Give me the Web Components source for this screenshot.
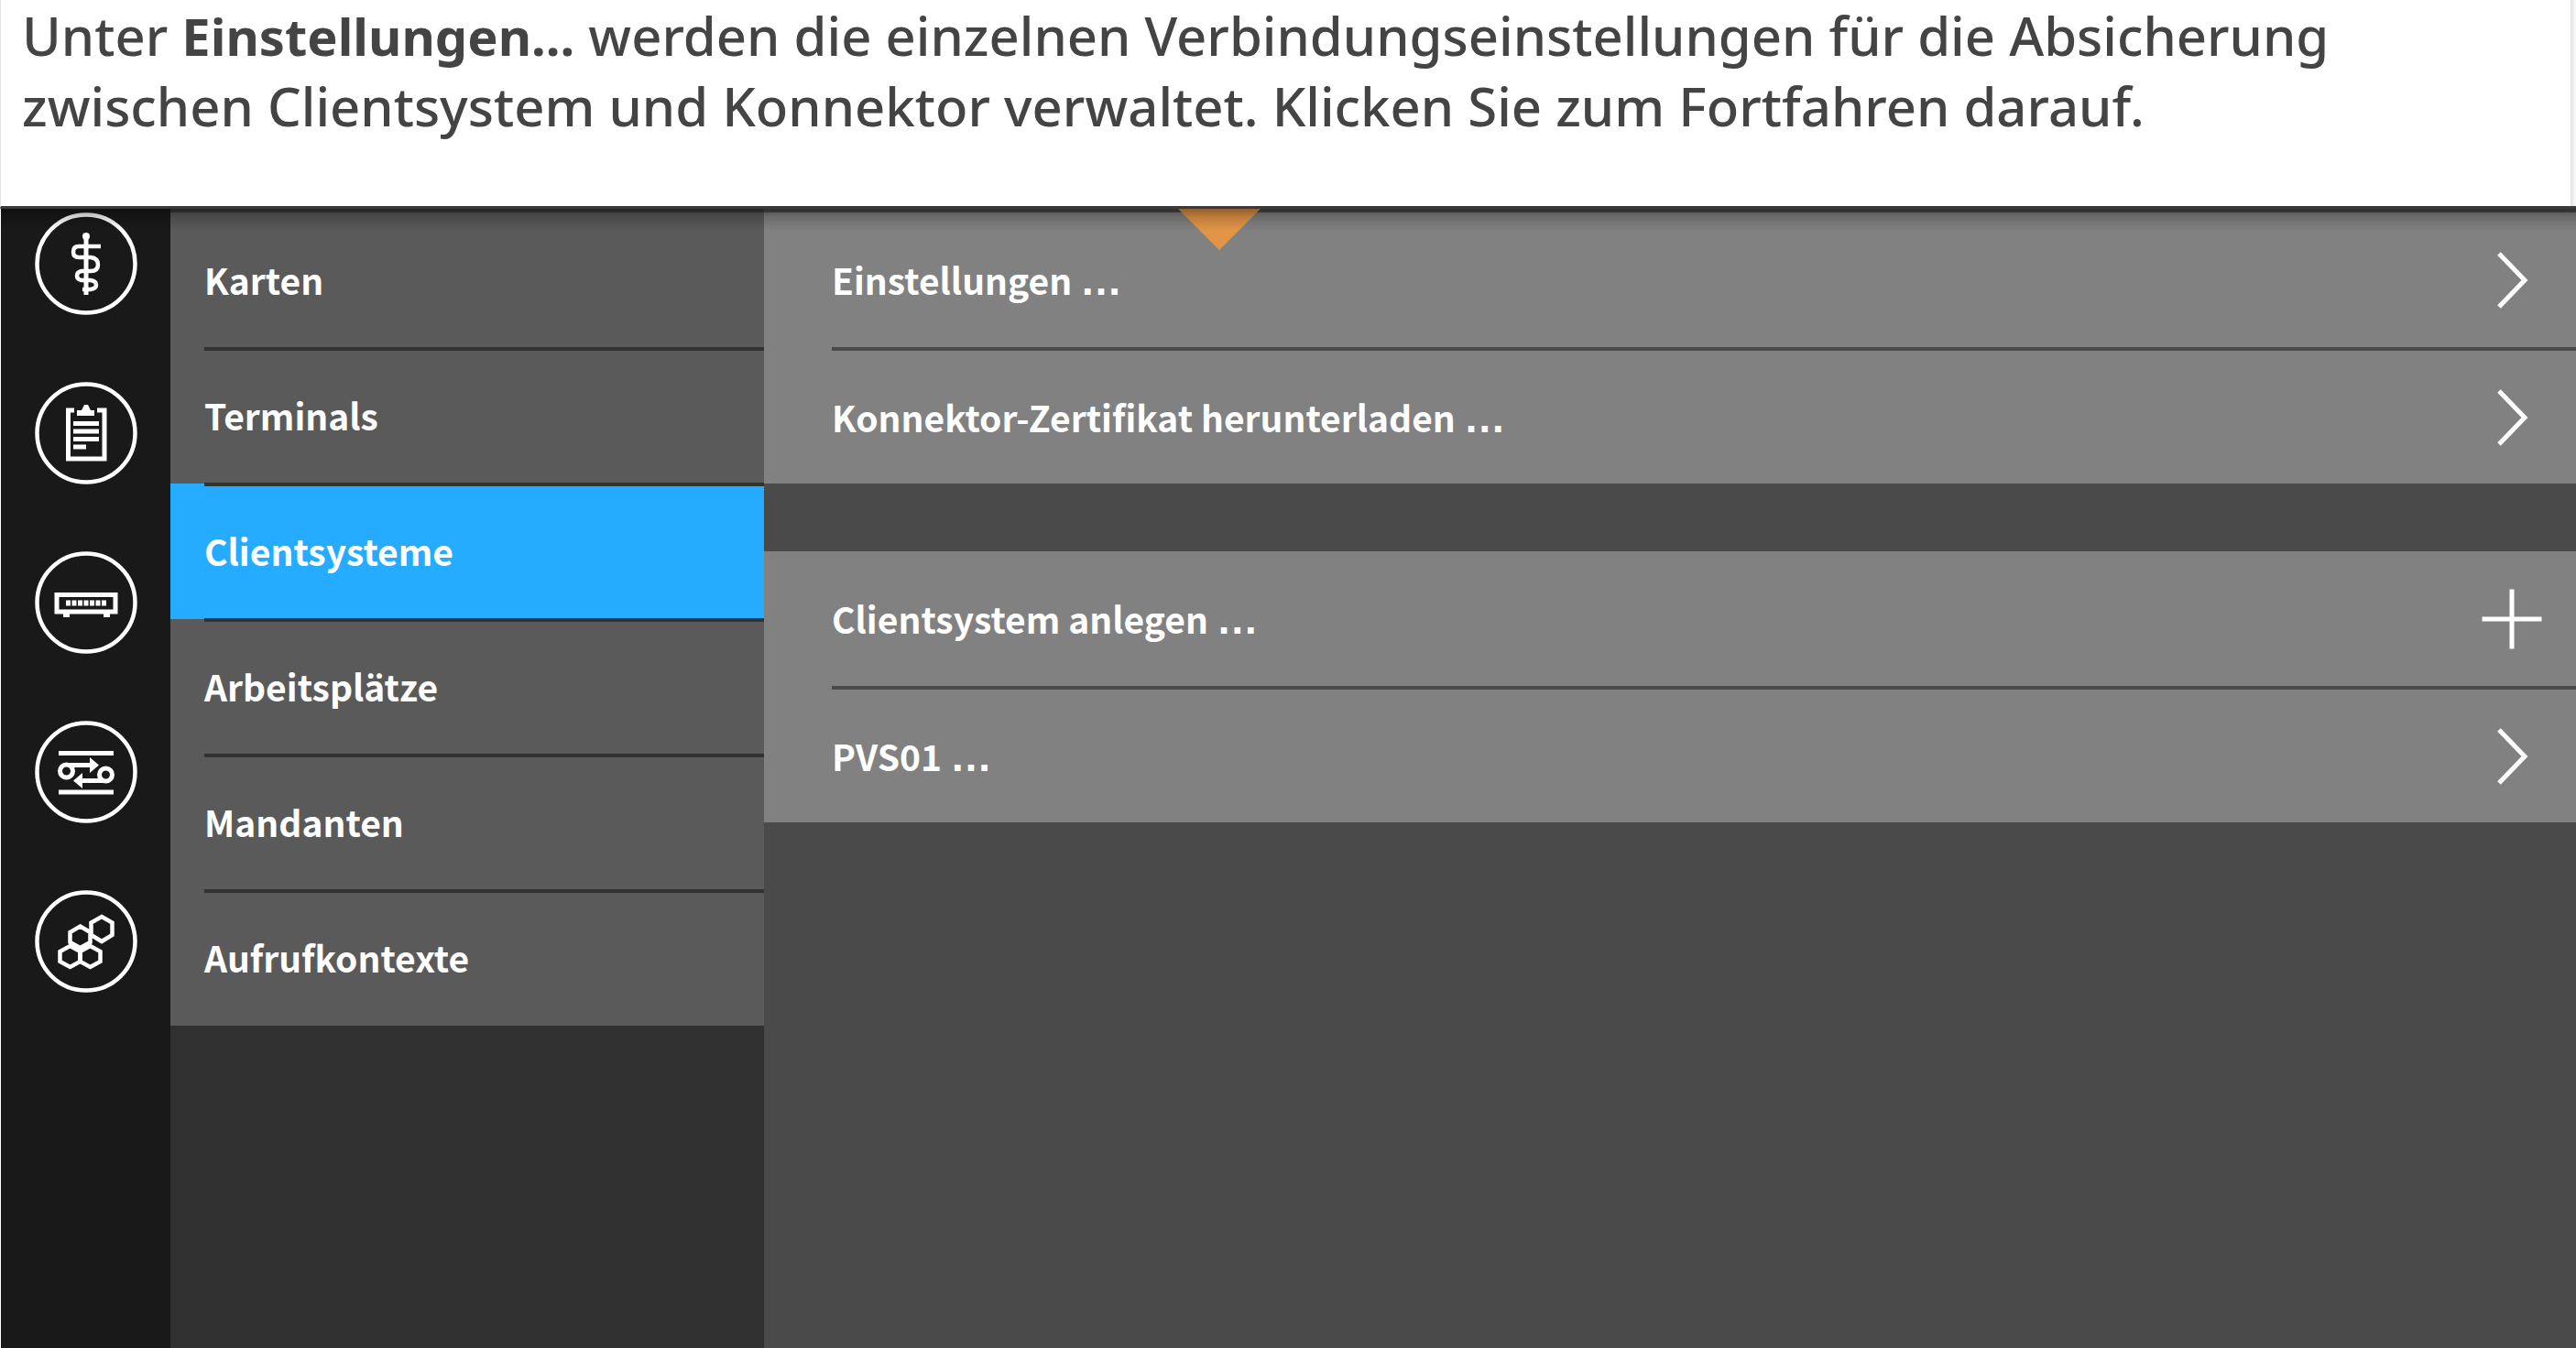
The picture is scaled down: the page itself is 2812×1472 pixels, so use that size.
<!DOCTYPE html>
<html lang="de">
<head>
<meta charset="utf-8">
<title>Konnektor – Clientsysteme</title>
<style>
body { margin: 0; background: #4a4a4a; }
</style>
</head>
<body>
<konnektor-page></konnektor-page>
<script>
const define = (name, html) => customElements.define(name, class extends HTMLElement {
  constructor() {
    super();
    const t = document.createElement('template');
    t.innerHTML = typeof html === 'function' ? html(this) : html;
    this.attachShadow({ mode: 'open' }).append(t.content.cloneNode(true));
  }
});

define('tour-hint', `
<style>
:host { display: block; box-sizing: border-box; height: 228px; padding: 0 23px; background: #fff;
  border-left: 1px solid #e4e4e4; border-bottom: 3px solid #3a3a3a; position: relative; z-index: 2;
  color: #444; font: 500 58px/77px "Noto Sans", sans-serif; }
:host::after { content: ""; position: absolute; top: 0; bottom: 0; right: 0; width: 3px; background: #f6f6f6; border-left: 3px solid #e6e6e6; }
::slotted(strong) { font-size: 56px; font-weight: 700; line-height: 1; }
p { margin: 0; }
i { position: absolute; left: 1285px; top: 228px; width: 90px; height: 45px; background: #e39547; clip-path: polygon(0 0, 100% 0, 50% 100%); }
b { position: absolute; left: 0; right: 0; top: 228px; height: 24px; background: linear-gradient(rgba(0,0,0,.36), rgba(0,0,0,.16) 40%, rgba(0,0,0,0)); }
</style>
<p><slot></slot></p><i></i><b></b>`);

const icons = {
  medizin: `<path d="M56 28V90" stroke-width="5"/><circle cx="56" cy="26" r="3" fill="#fff" stroke-width="2"/><path d="M72 37H48Q42 37 42 43T48 49H61Q69 50 69 57T61 64H51Q46 65 46 69T51 74H61Q67 75 67 79T61 84H52" stroke-width="4.5"/>`,
  protokoll: `<path d="M43 31H36.500V84H76V31H68" stroke-width="5"/><path d="M46 37V31H51L54 25H58L61 31H65V37Z" fill="#fff" stroke="none"/><path d="M42 45.500H70M42 54H70M42 62.500H70M42 71H56" stroke-width="5"/>`,
  netz: `<path d="M24 47.500H88V66H24Z" stroke-width="5"/><path d="M34 56.500H78" stroke-width="6" stroke-dasharray="5 1.500"/><path d="M31 70H38M75 70H82" stroke-width="4"/>`,
  vpn: `<path d="M26 35.500H86M26 78H86" stroke-width="5"/><circle cx="34.500" cy="55" r="7" stroke-width="5"/><circle cx="77.500" cy="59" r="7" stroke-width="5"/><path d="M36 48.500H64M76 65.500H48" stroke-width="5"/><path d="M60 40L70 48.500L60 57ZM52 57L42 65.500L52 74Z" fill="#fff" stroke="none"/>`,
  module: `<g stroke-width="4.500"><path d="M73 29L84.500 35.500V49L73 56L61.500 49V35.500Z"/><path d="M49.500 39.500L60.500 46V57L49.500 63L38.500 57V46Z"/><path d="M38.500 61L49.500 67V78L38.500 84L27.500 78V67Z"/><path d="M60.500 61L71.500 67V78L60.500 84L49.500 78V67Z"/></g>`
};

define('rail-button', el => `
<style>
:host { display: block; }
button { display: block; width: 112px; height: 112px; padding: 0; border: 0; border-radius: 50%; background: none; }
svg { display: block; width: 112px; height: 112px; fill: none; stroke: #fff; }
</style>
<button type="button" aria-label="${el.getAttribute('label')}"><svg viewBox="0 0 112 112"><circle cx="56" cy="56" r="53.500" stroke-width="4.500"/>${icons[el.getAttribute('icon')]}</svg></button>`);

define('icon-rail', `
<style>
:host { display: flex; flex-direction: column; align-items: center; gap: 73px; box-sizing: border-box; width: 185px; padding-top: 4px; background: #191919; flex: none; }
</style><slot></slot>`);

define('menu-entry', `
<style>
:host { display: flow-root; height: 148px; padding-left: 37px; background: #5a5a5a; }
:host([active]) { background: #25abff; }
a { display: flex; align-items: center; box-sizing: border-box; height: 149px; margin-top: -1px; padding-bottom: 6px; border-top: 4px solid #303233; color: #fff; text-decoration: none;
  font: 700 39px/60px "Noto Sans CJK JP", sans-serif; }
:host(:first-child) a { border-color: transparent; }
</style>
<a href="#"><slot></slot></a>`);

define('side-menu', `
<style>
:host { display: block; box-sizing: border-box; width: 648px; border-top: 4px solid #3c3c3c; background: #313131; flex: none; }
</style><nav><slot></slot></nav>`);

define('action-row', el => `
<style>
:host { display: flow-root; height: 148px; padding-left: 74px; background: #818181; }
button { display: flex; align-items: center; justify-content: space-between; box-sizing: border-box; width: 100%; height: 149px; margin: -1px 0 0; padding: 0 36px 0 0;
  border: 0; border-top: 4px solid #4a4a4a; background: none; color: #fff; text-align: left;
  font: 700 39px/60px "Noto Sans CJK JP", sans-serif; }
:host(:first-child) button { border-top: 0; }
.label { padding-bottom: 2px; }
.dots { font: 700 46px/1 "Liberation Sans", sans-serif; }
svg { width: 68px; height: 68px; fill: none; stroke: #fff; stroke-width: 5; flex: none; }
</style>
<button type="button"><span class="label"><slot></slot> <span class="dots">…</span></span>
<svg viewBox="0 0 68 68"><path d="${el.hasAttribute('add') ? 'M1.500 34H66.500M34 1.500V66.500' : 'M20 5L48 34L20 63'}"/></svg></button>`);

define('action-group', `<style>:host { display: block; }</style><slot></slot>`);

define('content-panel', `
<style>
:host { display: flex; flex-direction: column; gap: 74px; box-sizing: border-box; flex: 1; min-width: 0; padding-top: 4px; background: #4a4a4a; }
</style><slot></slot>`);

define('konnektor-page', `
<style>
:host { display: flex; flex-direction: column; min-height: 100vh; }
main { display: flex; flex: 1; border-left: 1px solid #fff; }
</style>
<tour-hint>Unter <strong>Einstellungen...</strong> werden die einzelnen Verbindungseinstellungen für die Absicherung<br>zwischen Clientsystem und Konnektor verwaltet. Klicken Sie zum Fortfahren darauf.</tour-hint>
<main>
<icon-rail>
<rail-button icon="medizin" label="Praxis"></rail-button>
<rail-button icon="protokoll" label="Protokoll"></rail-button>
<rail-button icon="netz" label="Netzwerk"></rail-button>
<rail-button icon="vpn" label="VPN"></rail-button>
<rail-button icon="module" label="Module"></rail-button>
</icon-rail>
<side-menu>
<menu-entry>Karten</menu-entry>
<menu-entry>Terminals</menu-entry>
<menu-entry active>Clientsysteme</menu-entry>
<menu-entry>Arbeitsplätze</menu-entry>
<menu-entry>Mandanten</menu-entry>
<menu-entry>Aufrufkontexte</menu-entry>
</side-menu>
<content-panel>
<action-group>
<action-row>Einstellungen</action-row>
<action-row>Konnektor-Zertifikat herunterladen</action-row>
</action-group>
<action-group>
<action-row add>Clientsystem anlegen</action-row>
<action-row>PVS01</action-row>
</action-group>
</content-panel>
</main>`);
</script>
</body>
</html>
